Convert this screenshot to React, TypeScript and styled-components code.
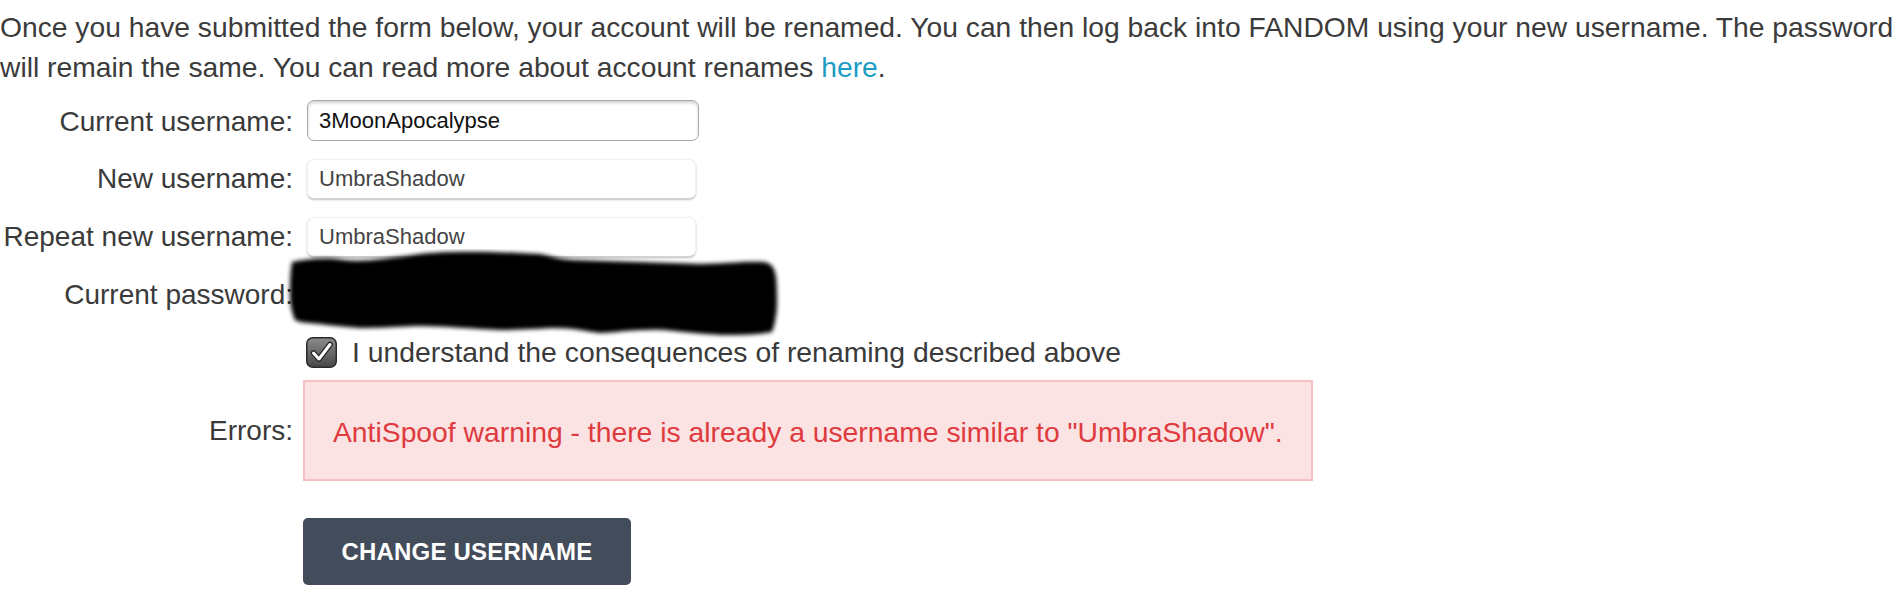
import React from 'react';
import styled, { createGlobalStyle } from 'styled-components';

const GlobalStyle = createGlobalStyle`
    html, body {
        margin: 0;
        padding: 0;
        background: #fff;
        overflow-x: hidden;
    }
    body {
        font-family: "Liberation Sans", Arial, Helvetica, sans-serif;
        color: #3a3a3a;
    }
`

function Checkmark() {
    return (
        <svg width="31" height="31" viewBox="0 0 31 31">
            <defs>
                <linearGradient id="cbg" x1="0" y1="0" x2="0" y2="1">
                    <stop offset="0" stopColor="#8c8c8c" />
                    <stop offset="1" stopColor="#474747" />
                </linearGradient>
            </defs>
            <rect x="0.75" y="0.75" width="29.5" height="29.5" rx="6" fill="url(#cbg)" stroke="#2b2b2b" strokeWidth="1.5" />
            <path d="M7.5 16 L13 22 L24 7.5" fill="none" stroke="#262626" strokeWidth="5.5" strokeLinecap="round" strokeLinejoin="round" />
            <path d="M7.5 16 L13 22 L24 7.5" fill="none" stroke="#fff" strokeWidth="3" strokeLinecap="round" strokeLinejoin="round" />
        </svg>
    )
}

// the scribble that hides the password field
function Redaction() {
    return (
        <Scribble width="500" height="92" viewBox="0 0 500 92">
            <defs>
                <filter id="smudge" x="-5%" y="-20%" width="110%" height="140%">
                    <feGaussianBlur stdDeviation="2.2" />
                </filter>
            </defs>
            <path
                filter="url(#smudge)"
                fill="#000"
                d="M8 13 C25 10 40 8 60 11 C80 13 100 10 136 5 C160 2 200 2 256 5 C268 7 272 10 290 11 C330 12 380 14 416 15 C440 15 460 12 480 13 C492 15 493 25 493 51 C493 62 492 72 488 83 C470 86 450 86 436 86 C420 85 410 84 380 81 C350 80 330 84 316 84 C300 82 290 79 270 79 C250 80 230 81 216 81 C190 80 160 77 136 77 C110 78 90 79 76 79 C60 78 45 76 36 75 C22 74 14 73 11 71 C7 62 6 52 6 45 C6 35 6 26 8 13 Z"
            />
        </Scribble>
    )
}

function App() {
    return (
        <>
            <GlobalStyle />
            <Page>
                <Intro>
                    Once you have submitted the form below, your account will be renamed. You can then log back into FANDOM using your new username. The password<br />
                    will remain the same. You can read more about account renames <Link href="#">here</Link>.
                </Intro>
                <Form onSubmit={e => e.preventDefault()}>
                    <Row $top={13}>
                        <Label $pad={6}>Current username:</Label>
                        <Cell>
                            <PlainInput type="text" name="oldusername" defaultValue="3MoonApocalypse" />
                        </Cell>
                    </Row>
                    <Row $top={18}>
                        <Label $pad={4}>New username:</Label>
                        <Cell>
                            <SoftInput type="text" name="newusername" defaultValue="UmbraShadow" />
                        </Cell>
                    </Row>
                    <Row $top={18}>
                        <Label $pad={4}>Repeat new username:</Label>
                        <Cell>
                            <SoftInput type="text" name="newusernamerepeat" defaultValue="UmbraShadow" />
                        </Cell>
                    </Row>
                    <Row $top={18}>
                        <Label $pad={4}>Current password:</Label>
                        <Cell>
                            <SoftInput type="password" name="password" defaultValue="hunter2hunter2" />
                            <Redaction />
                        </Cell>
                    </Row>
                    <Row $top={21} $center>
                        <Label $pad={0} />
                        <Consent>
                            <Checkmark />
                            <span>I understand the consequences of renaming described above</span>
                        </Consent>
                    </Row>
                    <Row $top={12} $center>
                        <Label $pad={0}>Errors:</Label>
                        <ErrorBox>AntiSpoof warning - there is already a username similar to "UmbraShadow".</ErrorBox>
                    </Row>
                    <Row $top={37}>
                        <Label $pad={0} />
                        <SubmitButton type="submit">Change username</SubmitButton>
                    </Row>
                </Form>
            </Page>
        </>
    );
}

const Page = styled.div`
    padding-top: 7px;
    width: 1901px;
    overflow: hidden;
`

const Intro = styled.p`
    margin: 0;
    white-space: nowrap;
    font-size: 28.25px;
    line-height: 40px;
    color: #3b3b3b;
`

const Link = styled.a`
    color: #1b9cc5;
    text-decoration: none;
`

const Form = styled.form`
    display: flex;
    flex-direction: column;
`

const Row = styled.div<{ $top: number; $center?: boolean }>`
    display: grid;
    grid-template-columns: 293px auto;
    column-gap: 10px;
    justify-content: start;
    align-items: ${p => (p.$center ? 'center' : 'start')};
    margin-top: ${p => p.$top}px;
`

const Label = styled.label<{ $pad: number }>`
    display: block;
    text-align: right;
    white-space: nowrap;
    font-size: 28px;
    line-height: 32px;
    color: #3a3a3a;
    padding-top: ${p => p.$pad}px;
`

const Cell = styled.div`
    position: relative;
`

const PlainInput = styled.input`
    box-sizing: border-box;
    display: block;
    width: 392px;
    height: 41px;
    margin-left: 4px;
    padding: 0 11px;
    border: 1px solid #a9a9a9;
    border-radius: 7px;
    box-shadow: inset 0 2px 3px rgba(0, 0, 0, 0.18);
    font-family: "Liberation Sans", Arial, Helvetica, sans-serif;
    font-size: 22px;
    color: #111;
    background: #fff;
    outline: none;
`

const SoftInput = styled(PlainInput)`
    width: 389px;
    height: 40px;
    border: 1px solid #f1f1f1;
    border-bottom-color: #d4d4d4;
    box-shadow: 0 1px 2px rgba(0, 0, 0, 0.25);
    color: #444;
`

const Scribble = styled.svg`
    position: absolute;
    left: -19px;
    top: -26px;
    z-index: 2;
    pointer-events: none;
`

const Consent = styled.label`
    display: flex;
    align-items: center;
    gap: 15px;
    margin-left: 3px;
    font-size: 28.35px;
    line-height: 32px;
    color: #3a3a3a;
    white-space: nowrap;
`

const ErrorBox = styled.div`
    box-sizing: border-box;
    width: 1010px;
    padding: 34px 28px 30px;
    border: 2px solid #f6c1c3;
    background: #fbe2e3;
    color: #df3a3e;
    font-size: 28.3px;
    line-height: 33px;
    white-space: nowrap;
`

const SubmitButton = styled.button`
    width: 328px;
    height: 67px;
    border: none;
    border-radius: 5px;
    background-color: #434c5a;
    color: #fff;
    font-family: "Liberation Sans", Arial, Helvetica, sans-serif;
    font-size: 24px;
    font-weight: 700;
    letter-spacing: 0.2px;
    text-transform: uppercase;
    cursor: pointer;
    &:hover {
        opacity: .9;
    }
`

export default App;
